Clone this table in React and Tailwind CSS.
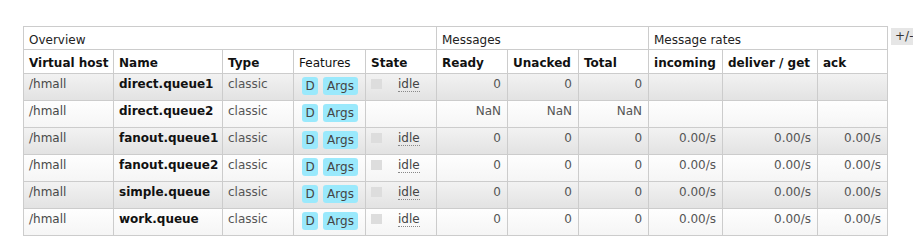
const queues = [
  { name: "direct.queue1", state: "idle", counts: ["0", "0", "0"], rates: null },
  { name: "direct.queue2", state: null, counts: ["NaN", "NaN", "NaN"], rates: null },
  { name: "fanout.queue1", state: "idle", counts: ["0", "0", "0"], rates: ["0.00/s", "0.00/s", "0.00/s"] },
  { name: "fanout.queue2", state: "idle", counts: ["0", "0", "0"], rates: ["0.00/s", "0.00/s", "0.00/s"] },
  { name: "simple.queue", state: "idle", counts: ["0", "0", "0"], rates: ["0.00/s", "0.00/s", "0.00/s"] },
  { name: "work.queue", state: "idle", counts: ["0", "0", "0"], rates: ["0.00/s", "0.00/s", "0.00/s"] },
];

const cols = [90, 109, 71, 72, 71, 71, 71, 70, 74, 95, 70];

const cell = "border border-[#ccc] align-top px-[5px] pt-[3px] leading-[15px] whitespace-nowrap";
const groupHead = "border border-[#ccc] align-top px-[5px] pt-[4px] h-[23px] text-left font-normal text-[#222] whitespace-nowrap";
const colHead = "border border-[#ccc] align-top px-[5px] pt-[4px] h-[24px] text-left font-bold text-[#111] whitespace-nowrap";

const Tag = ({ children, w }) => (
  <span className={`inline-flex h-[18px] items-center justify-center rounded-[3px] bg-[#9ae9fc] text-[#444] ${w}`}>
    {children}
  </span>
);

const App = () => {
  return (
    <div
      className="w-[913px] h-[244px] overflow-hidden bg-white text-[12px]"
      style={{ fontFamily: '"DejaVu Sans", Verdana, sans-serif' }}
    >
      <div className="flex items-start pl-[23px] pt-[26px] gap-[3px]">
        <table className="border-collapse table-fixed w-[865px] shrink-0">
          <colgroup>
            {cols.map((w, i) => (
              <col key={i} style={{ width: w }} />
            ))}
          </colgroup>
          <thead>
            <tr>
              <th colSpan={5} className={groupHead}>Overview</th>
              <th colSpan={3} className={groupHead}>Messages</th>
              <th colSpan={3} className={groupHead}>Message rates</th>
            </tr>
            <tr>
              <th className={colHead}>Virtual host</th>
              <th className={colHead}>Name</th>
              <th className={colHead}>Type</th>
              <th className={`${colHead} font-normal`}>Features</th>
              <th className={colHead}>State</th>
              <th className={colHead}>Ready</th>
              <th className={colHead}>Unacked</th>
              <th className={colHead}>Total</th>
              <th className={colHead}>incoming</th>
              <th className={colHead}>deliver / get</th>
              <th className={colHead}>ack</th>
            </tr>
          </thead>
          <tbody>
            {queues.map((q, i) => (
              <tr
                key={q.name}
                className={
                  i % 2 === 0
                    ? "bg-gradient-to-b from-[#f2f2f2] to-[#e2e2e2]"
                    : "bg-gradient-to-b from-[#fefefe] to-[#f5f5f5]"
                }
              >
                <td className={`${cell} h-[27px] text-[#484848]`}>/hmall</td>
                <td className={`${cell} font-bold text-[#111]`}>{q.name}</td>
                <td className={`${cell} text-[#555]`}>classic</td>
                <td className={`${cell} pl-[8px]`}>
                  <div className="flex gap-[5px]">
                    <Tag w="w-[16px]">D</Tag>
                    <Tag w="w-[35px]">Args</Tag>
                  </div>
                </td>
                <td className={`${cell} text-[#444]`}>
                  {q.state && (
                    <div className="flex items-start">
                      <span className="mt-[2px] w-[11px] h-[10px] bg-[#ddd]" />
                      <span className="ml-[16px] border-b border-dotted border-[#888] leading-[14px]">
                        {q.state}
                      </span>
                    </div>
                  )}
                </td>
                {q.counts.map((c, j) => (
                  <td key={j} className={`${cell} text-right pr-[6px] text-[#555]`}>{c}</td>
                ))}
                {[0, 1, 2].map((j) => (
                  <td key={j} className={`${cell} text-right pr-[6px] text-[#555]`}>
                    {q.rates ? q.rates[j] : ""}
                  </td>
                ))}
              </tr>
            ))}
          </tbody>
        </table>
        <span className="mt-[2px] shrink-0 bg-[#e6e6e6] px-[4px] h-[17px] leading-[17px] text-[#333]">+/-</span>
      </div>
    </div>
  );
};

export default App;
